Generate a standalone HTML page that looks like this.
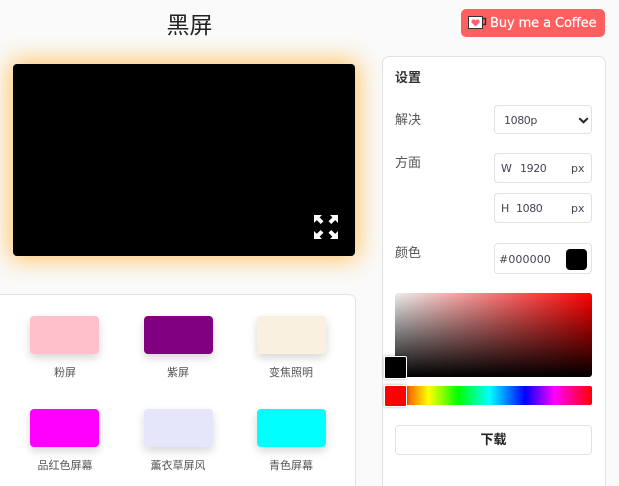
<!DOCTYPE html>
<html lang="zh">
<head>
<meta charset="utf-8">
<title>黑屏</title>
<style>
*{box-sizing:border-box}
html,body{margin:0;padding:0;width:619px;height:486px;overflow:hidden}
body{background:#fafafa;font-family:"DejaVu Sans","Liberation Sans","Noto Sans CJK SC",sans-serif;color:#333}
#wrap{position:relative;width:619px;height:486px;overflow:hidden;background:#fafafa}
.a{position:absolute}
.cjk{font-family:"Liberation Sans","Noto Sans CJK SC",sans-serif}
h1{position:absolute;margin:0;left:90px;width:199px;top:10px;text-align:center;font-size:23px;line-height:30px;font-weight:400;color:#222}
.coffee{left:461px;top:9px;width:144px;height:28px;background:#ff5f5f;border-radius:5px;color:#fff;font-size:13px;line-height:29px;padding-left:29px;white-space:nowrap;letter-spacing:-.1px;-webkit-text-stroke:.2px #fff}
.screen{left:13px;top:64px;width:342px;height:192px;background:#000;border-radius:4px;box-shadow:0 0 24px 4px #ffc56a}
.card{background:#fff;border:1px solid #e2e2e2;border-bottom:0;border-radius:7px 7px 0 0}
.sw{position:absolute;width:69px;height:38px;border-radius:4px;box-shadow:0 4px 9px rgba(0,0,0,.16)}
.lb{position:absolute;width:110px;text-align:center;font-size:11px;line-height:16px;color:#555}
.lab{position:absolute;left:395px;font-size:13px;line-height:18px;color:#555}
.box{position:absolute;left:494px;width:98px;background:#fff;border:1px solid #e2e2e2;border-radius:4px;font-size:11px;color:#445;white-space:nowrap}
.box span{position:absolute;top:50%;transform:translateY(-50%);line-height:14px;margin-top:1px}
.n{letter-spacing:-.4px}
</style>
</head>
<body>
<div id="wrap">
<h1 class="cjk">黑屏</h1>
<div class="a coffee">Buy me a Coffee</div>
<svg class="a" style="left:468px;top:16px" width="19" height="14" viewBox="0 0 19 14">
<rect x=".5" y=".5" width="14" height="12" fill="#fff" stroke="#333" stroke-width="1"/>
<path d="M15 2.500h2.500v6H15" fill="none" stroke="#333" stroke-width="1.500"/>
<path d="M7.500 10.500 3.500 6.500V4.500L4.500 3.500H6.500L7.500 4.500 8.500 3.500h2l1 1v2z" fill="#ff5f6f"/>
</svg>

<div class="a screen"></div>
<svg class="a" style="left:313px;top:214px" width="26" height="26" viewBox="0 0 26 26" fill="#fff">
<path d="M1 1h8L6.600 3.400l3.900 3.800-2.800 2.800-3.900-3.900L1 9z"/>
<path d="M25 1h-8l2.400 2.400-3.900 3.800 2.800 2.800 3.900-3.900L25 9z"/>
<path d="M1 25h8l-2.400-2.400 3.900-3.800-2.800-2.800-3.900 3.900L1 17z"/>
<path d="M25 25h-8l2.400-2.400-3.900-3.800 2.800-2.800 3.900 3.900L25 17z"/>
</svg>

<div class="a card" style="left:0;top:294px;width:356px;height:192px;border-left:0;border-top-left-radius:0"></div>
<div class="sw" style="left:30px;top:316px;background:#ffc0cb"></div>
<div class="sw" style="left:144px;top:316px;background:#800080"></div>
<div class="sw" style="left:257px;top:316px;background:#faf0e0"></div>
<div class="sw" style="left:30px;top:409px;background:#f0f"></div>
<div class="sw" style="left:144px;top:409px;background:#e6e6fa"></div>
<div class="sw" style="left:257px;top:409px;background:#0ff"></div>
<div class="lb cjk" style="left:10px;top:365px">粉屏</div>
<div class="lb cjk" style="left:123px;top:365px">紫屏</div>
<div class="lb cjk" style="left:236px;top:365px">变焦照明</div>
<div class="lb cjk" style="left:10px;top:458px">品红色屏幕</div>
<div class="lb cjk" style="left:123px;top:458px">薰衣草屏风</div>
<div class="lb cjk" style="left:236px;top:458px">青色屏幕</div>

<div class="a card" style="left:382px;top:56px;width:224px;height:430px"></div>
<div class="lab cjk" style="top:69px;font-weight:700;color:#333">设置</div>
<div class="lab cjk" style="top:111px">解决</div>
<div class="lab cjk" style="top:154px">方面</div>
<div class="lab cjk" style="top:244px">颜色</div>

<div class="box" style="top:105px;height:29px"><span class="n" style="left:9px">1080p</span>
<svg style="position:absolute;left:83px;top:11px" width="11" height="7" viewBox="0 0 11 7"><path d="M1.200 1.200 5.500 5.200 9.800 1.200" fill="none" stroke="#222" stroke-width="2"/></svg></div>
<div class="box" style="top:153px;height:30px"><span style="left:6px">W</span><span class="n" style="left:25px">1920</span><span style="left:76px">px</span></div>
<div class="box" style="top:193px;height:30px"><span style="left:6px">H</span><span class="n" style="left:21px">1080</span><span style="left:76px">px</span></div>
<div class="box" style="top:243px;height:31px"><span style="left:4px;letter-spacing:.1px">#000000</span><div style="position:absolute;left:71px;top:5px;width:21px;height:21px;background:#000;border-radius:4px"></div></div>

<div class="a" style="left:395px;top:293px;width:197px;height:84px;border-radius:3px;background:linear-gradient(to top,#000,rgba(0,0,0,0)),linear-gradient(to right,#eee,#f00)"></div>
<div class="a" style="left:384px;top:356px;width:23px;height:23px;background:#000;border:1px solid #fff;border-radius:2px;box-shadow:0 0 3px rgba(0,0,0,.3)"></div>
<div class="a" style="left:395px;top:386px;width:197px;height:19px;border-radius:2px;background:linear-gradient(to right,#f00 0%,#ff0 17%,#0f0 32%,#0ff 48%,#00f 66%,#f0f 81%,#f00 100%)"></div>
<div class="a" style="left:384px;top:385px;width:23px;height:22px;background:#f00;border:1px solid #fff;border-radius:2px;box-shadow:0 0 3px rgba(0,0,0,.3)"></div>

<div class="a cjk" style="left:395px;top:425px;width:197px;height:30px;background:#fff;border:1px solid #e2e2e2;border-radius:4px;text-align:center;font-size:13px;line-height:28px;font-weight:700;color:#222">下载</div>
</div>
</body>
</html>
